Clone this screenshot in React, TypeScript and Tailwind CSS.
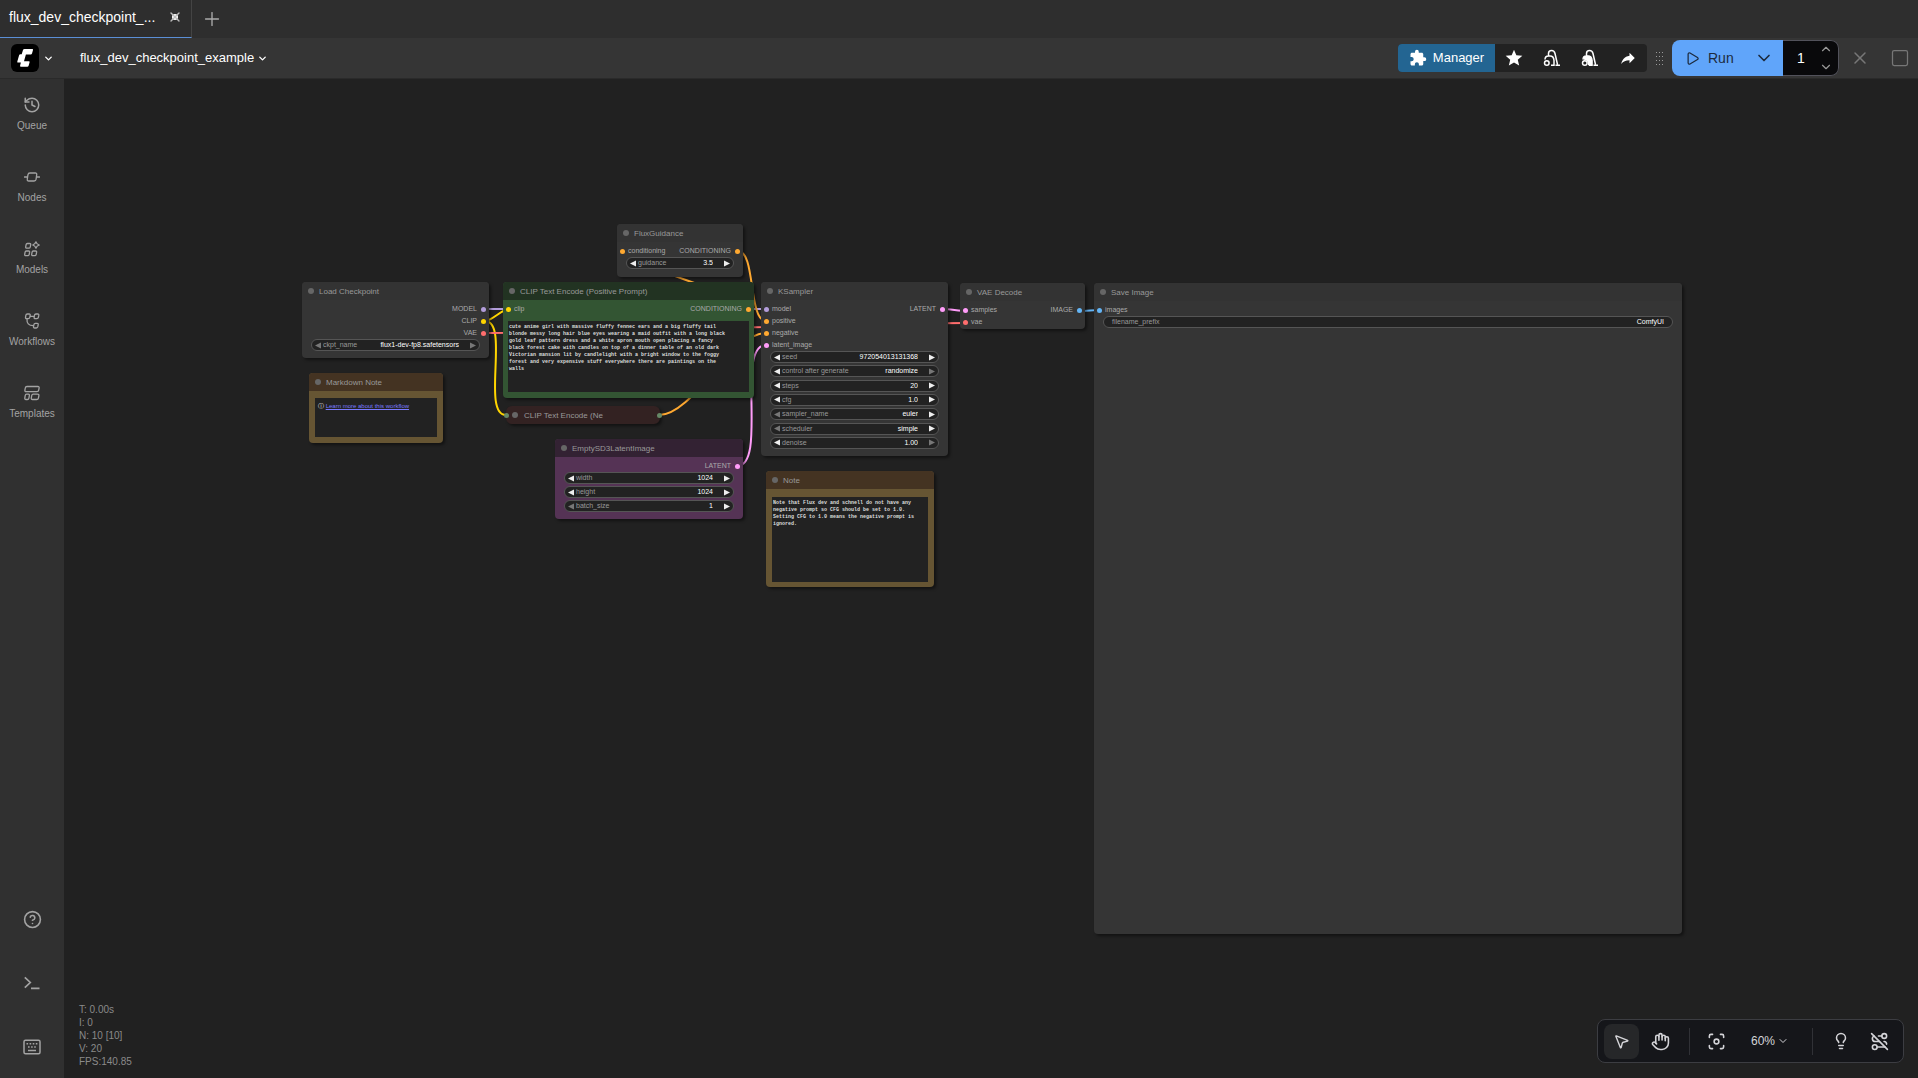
import React from "react";
import {
  ChevronDown,
  ChevronUp,
  CircleQuestionMark,
  Focus,
  Hand,
  History,
  Lightbulb,
  MousePointer2,
  Play,
  Plus,
  RouteOff,
  Square,
  X,
} from "lucide-react";
import { MdExtension, MdStar } from "react-icons/md";

type Slot = { name: string; color: string };
type WidgetData = {
  label: string;
  value: string;
  kind?: "number" | "combo" | "text";
  prevOff?: boolean;
  nextOff?: boolean;
};

const MODEL = "bg-[#b39ddb]";
const CLIP = "bg-[#ffd500]";
const VAE = "bg-[#ff6e6e]";
const COND = "bg-[#ffa931]";
const LATENT = "bg-[#ff9cf9]";
const IMAGE = "bg-[#64b5f6]";

function Arrow({ flip, off, label }: { flip?: boolean; off?: boolean; label: string }) {
  return (
    <button type="button" aria-label={label} disabled={off} className="h-[7px] w-[6px] shrink-0">
      <svg viewBox="0 0 6 7" className={`block h-[7px] w-[6px] ${off ? "fill-[#777]" : "fill-[#eee]"}`}>
        <path d={flip ? "M0 0.5 6 3.5 0 6.5Z" : "M6 0.5 0 3.5 6 6.5Z"} />
      </svg>
    </button>
  );
}

function Widget({ node, data }: { node: string; data: WidgetData }) {
  const id = `${node}-${data.label.replace(/\s/g, "-")}`;
  const isText = data.kind === "text";
  const field = "h-[10px] min-w-0 flex-1 bg-transparent text-right text-[7px] leading-[10px] text-white outline-none";
  return (
    <div
      className={`flex h-[12px] shrink-0 items-center rounded-full border border-[#555] bg-[#222] text-[7px] leading-[10px] ${
        isText ? "px-[8px]" : "px-[3px]"
      }`}
    >
      {!isText && <Arrow off={data.prevOff} label={`Decrease ${data.label}`} />}
      <label htmlFor={id} className={`shrink-0 text-[#999] ${isText ? "" : "ml-[2px]"}`}>
        {data.label}
      </label>
      {data.kind === "combo" ? (
        <select id={id} className={`${field} appearance-none [text-align-last:right]`}>
          <option>{data.value}</option>
        </select>
      ) : (
        <input id={id} type="text" defaultValue={data.value} className={field} />
      )}
      {!isText && (
        <span className="ml-[11px] flex">
          <Arrow flip off={data.nextOff} label={`Increase ${data.label}`} />
        </span>
      )}
    </div>
  );
}

function Node({
  title,
  place,
  head = "bg-[#333]",
  body = "bg-[#353535]",
  inputs = [],
  outputs = [],
  widgets = [],
  children,
}: {
  title: string;
  place: string;
  head?: string;
  body?: string;
  inputs?: Slot[];
  outputs?: Slot[];
  widgets?: WidgetData[];
  children?: React.ReactNode;
}) {
  const key = title.replace(/\W/g, "");
  return (
    <section className={`absolute flex flex-col overflow-hidden rounded-[4px] shadow-[2px_2px_3px_rgba(0,0,0,0.45)] ${place} ${body}`}>
      <header className={`flex h-[18px] shrink-0 items-center gap-[5px] pl-[6px] ${head}`}>
        <span className="size-[6px] rounded-full bg-[#666]" />
        <h2 className="pt-px text-[8px] leading-[10px] whitespace-nowrap text-[#999]">{title}</h2>
      </header>
      {(inputs.length > 0 || outputs.length > 0) && (
        <div className="flex shrink-0 justify-between pt-[3px] text-[7px] leading-[12px] text-[#aaa]">
          <ul className="pl-[3px]">
            {inputs.map((s) => (
              <li key={s.name} className="flex h-[12px] items-center gap-[3px]">
                <span className={`size-[5px] rounded-full ${s.color}`} />
                {s.name}
              </li>
            ))}
          </ul>
          <ul className="pr-[3px]">
            {outputs.map((s) => (
              <li key={s.name} className="flex h-[12px] items-center justify-end gap-[4px]">
                {s.name}
                <span className={`size-[5px] rounded-full ${s.color}`} />
              </li>
            ))}
          </ul>
        </div>
      )}
      {widgets.length > 0 && (
        <div className="flex flex-1 flex-col justify-between px-[9px] pb-[7px]">
          {widgets.map((w) => (
            <Widget key={w.label} node={key} data={w} />
          ))}
        </div>
      )}
      {children}
    </section>
  );
}

const PROMPT = `cute anime girl with massive fluffy fennec ears and a big fluffy tail
blonde messy long hair blue eyes wearing a maid outfit with a long black
gold leaf pattern dress and a white apron mouth open placing a fancy
black forest cake with candles on top of a dinner table of an old dark
Victorian mansion lit by candlelight with a bright window to the foggy
forest and very expensive stuff everywhere there are paintings on the
walls`;

const NOTE = `Note that Flux dev and schnell do not have any
negative prompt so CFG should be set to 1.0.
Setting CFG to 1.0 means the negative prompt is
ignored.`;

const area =
  "block min-h-0 flex-1 resize-none overflow-hidden bg-[#222] px-px pt-[3px] font-['Liberation_Mono',monospace] text-[5px] leading-[7px] font-bold whitespace-pre text-[#ddd] outline-none";

function Links() {
  return (
    <svg aria-hidden="true" viewBox="64 79 1854 999" className="absolute top-0 left-0 h-[999px] w-[1854px] fill-none" strokeWidth="2">
      <g>
        <path stroke="#b39ddb" d="M485 309C555 309 696 309 766 309" />
        <path stroke="#ffd500" d="M485 321C492 321 502 309 509 309M485 321C510 321 481 415 506 415" />
        <path stroke="#ff6e6e" d="M485 333C605 333 846 323 966 323" />
        <path stroke="#ffa931" d="M749 309C784 309 588 251 623 251M738 251C756 251 748 321 766 321M659 415C693 415 732 333 766 333" />
        <path stroke="#ff9cf9" d="M737 466C768 466 735 345 766 345M943 309C949 309 960 311 966 311" />
        <path stroke="#64b5f6" d="M1080 311C1085 311 1095 310 1100 310" />
      </g>
    </svg>
  );
}

function Canvas() {
  return (
    <main className="relative min-w-0 flex-1 overflow-hidden bg-[#212121]">
      <Links />
      <Node
        title="Load Checkpoint"
        place="left-[238px] top-[203px] w-[187px] h-[76px]"
        outputs={[
          { name: "MODEL", color: MODEL },
          { name: "CLIP", color: CLIP },
          { name: "VAE", color: VAE },
        ]}
        widgets={[{ label: "ckpt_name", value: "flux1-dev-fp8.safetensors", kind: "combo", prevOff: true, nextOff: true }]}
      />
      <Node title="Markdown Note" place="left-[245px] top-[294px] w-[134px] h-[70px]" head="bg-[#432]" body="bg-[#653]">
        <div className="mx-[6px] mt-[7px] mb-[6px] flex-1 bg-[#222] px-[3px] pt-[4px] text-[6px] leading-[8px] text-white">
          ⓘ{" "}
          <a href="#workflow" className="text-[#7a7aff] underline">
            Learn more about this workflow
          </a>
        </div>
      </Node>
      <Node
        title="FluxGuidance"
        place="left-[553px] top-[145px] w-[126px] h-[53px]"
        inputs={[{ name: "conditioning", color: COND }]}
        outputs={[{ name: "CONDITIONING", color: COND }]}
        widgets={[{ label: "guidance", value: "3.5" }]}
      />
      <Node
        title="CLIP Text Encode (Positive Prompt)"
        place="left-[439px] top-[203px] w-[251px] h-[116px]"
        head="bg-[#232]"
        body="bg-[#353]"
        inputs={[{ name: "clip", color: CLIP }]}
        outputs={[{ name: "CONDITIONING", color: COND }]}
      >
        <textarea aria-label="Positive prompt" wrap="off" defaultValue={PROMPT} className={`mx-[5px] mt-[6px] mb-[6px] ${area}`} />
      </Node>
      <section className="absolute top-[327px] left-[442px] flex h-[18px] w-[154px] items-center justify-between rounded-[6px] bg-[#322] shadow-[2px_2px_3px_rgba(0,0,0,0.45)]">
        <span className="-ml-[2px] size-[5px] rounded-full bg-[#686]" />
        <span className="ml-[3px] size-[6px] rounded-full bg-[#666]" />
        <h2 className="ml-[6px] flex-1 pt-px text-[8px] leading-[10px] whitespace-nowrap text-[#999]">CLIP Text Encode (Ne</h2>
        <span className="-mr-[2px] size-[5px] rounded-full bg-[#686]" />
      </section>
      <Node
        title="EmptySD3LatentImage"
        place="left-[491px] top-[360px] w-[188px] h-[80px]"
        head="bg-[#323]"
        body="bg-[#535]"
        outputs={[{ name: "LATENT", color: LATENT }]}
        widgets={[
          { label: "width", value: "1024" },
          { label: "height", value: "1024" },
          { label: "batch_size", value: "1", prevOff: true },
        ]}
      />
      <Node
        title="KSampler"
        place="left-[697px] top-[203px] w-[187px] h-[174px]"
        inputs={[
          { name: "model", color: MODEL },
          { name: "positive", color: COND },
          { name: "negative", color: COND },
          { name: "latent_image", color: LATENT },
        ]}
        outputs={[{ name: "LATENT", color: LATENT }]}
        widgets={[
          { label: "seed", value: "972054013131368" },
          { label: "control after generate", value: "randomize", kind: "combo", nextOff: true },
          { label: "steps", value: "20" },
          { label: "cfg", value: "1.0" },
          { label: "sampler_name", value: "euler", kind: "combo", prevOff: true },
          { label: "scheduler", value: "simple", kind: "combo", prevOff: true },
          { label: "denoise", value: "1.00", nextOff: true },
        ]}
      />
      <Node title="Note" place="left-[702px] top-[392px] w-[168px] h-[116px]" head="bg-[#432]" body="bg-[#653]">
        <textarea aria-label="Note" wrap="off" defaultValue={NOTE} className={`mx-[6px] mt-[8px] mb-[5px] ${area}`} />
      </Node>
      <Node
        title="VAE Decode"
        place="left-[896px] top-[204px] w-[125px] h-[46px]"
        inputs={[
          { name: "samples", color: LATENT },
          { name: "vae", color: VAE },
        ]}
        outputs={[{ name: "IMAGE", color: IMAGE }]}
      />
      <Node
        title="Save Image"
        place="left-[1030px] top-[204px] w-[588px] h-[651px]"
        inputs={[{ name: "images", color: IMAGE }]}
        widgets={[{ label: "filename_prefix", value: "ComfyUI", kind: "text" }]}
      />

      <div className="absolute bottom-[10px] left-[15px] text-[10px] leading-[13px] text-[#8a8a8a]">
        <p>T: 0.00s</p>
        <p>I: 0</p>
        <p>N: 10 [10]</p>
        <p>V: 20</p>
        <p>FPS:140.85</p>
      </div>

      <div className="absolute right-[14px] bottom-[15px] flex h-[44px] items-center rounded-lg border border-[#3c3d42] bg-[#15161a] px-[6px] text-[#d4d4d8]">
        <button type="button" aria-label="Select" className="flex size-[35px] items-center justify-center rounded-lg bg-[#262729]">
          <MousePointer2 size={17} strokeWidth={2} />
        </button>
        <button type="button" aria-label="Pan" className="ml-1 flex size-[35px] items-center justify-center">
          <Hand size={19} strokeWidth={2} />
        </button>
        <span className="mr-[9px] ml-[11px] h-[27px] w-px bg-[#303136]" />
        <button type="button" aria-label="Fit view" className="flex size-[35px] items-center justify-center">
          <Focus size={19} strokeWidth={2} />
        </button>
        <button type="button" className="flex h-[35px] w-[72px] items-center justify-center gap-[2px] text-[12px]">
          60% <ChevronDown size={12} />
        </button>
        <span className="mr-[10px] ml-[6px] h-[27px] w-px bg-[#303136]" />
        <button type="button" aria-label="Toggle minimap" className="flex size-[35px] items-center justify-center">
          <Lightbulb size={18} strokeWidth={2} />
        </button>
        <button type="button" aria-label="Hide links" className="ml-1 flex size-[35px] items-center justify-center">
          <RouteOff size={19} strokeWidth={2} />
        </button>
      </div>
    </main>
  );
}

const line = "fill-none stroke-current";

const NodesIcon = () => (
  <svg viewBox="0 0 16 16" className={`size-[16px] ${line}`} strokeWidth="1.3" strokeLinecap="round">
    <path d="M6 4h5.2q1.8 0 1.5 1.6l-.6 4.6q-.3 1.8-2 1.8H4.8q-1.8 0-1.5-1.8l.6-4.4Q4.2 4 6 4ZM.5 8h3M12.5 8h3" />
  </svg>
);
const ModelsIcon = () => (
  <svg viewBox="0 0 16 16" className={`size-[16px] ${line}`} strokeWidth="1.3" strokeLinejoin="round">
    <path d="M3.4 2.500h2.200q1.300 0 1.100 1.200l-.4 2.100Q6 7.200 4.700 7.200H2.800q-1.300 0-1.100-1.300l.4-2.200q.2-1.200 1.300-1.200ZM2.300 10h2.200q1.300 0 1.100 1.200l-.4 2.100q-.3 1.400-1.600 1.400H1.800q-1.300 0-1.100-1.300l.4-2.200Q1.300 10 2.300 10ZM9.300 10h2.200q1.300 0 1.100 1.200l-.4 2.100q-.3 1.400-1.600 1.400H8.800q-1.300 0-1.100-1.300l.4-2.200Q8.300 10 9.300 10ZM12 .8q.6 2.400 3.300 3.200-2.700.8-3.300 3.200-.8-2.400-3.300-3.200Q11.200 3.200 12 .8Z" />
  </svg>
);
const WorkflowsIcon = () => (
  <svg viewBox="0 0 16 16" className={`size-[16px] ${line}`} strokeWidth="1.3">
    <path d="M3.3 1h1.900q1.200 0 1 1.200l-.4 2.100q-.3 1.300-1.500 1.300H2.600q-1.300 0-1.100-1.300l.4-2.100Q2.100 1 3.300 1ZM11.900 1h1.900q1.200 0 1 1.200l-.4 2.100q-.3 1.300-1.500 1.300h-1.700q-1.300 0-1.100-1.300l.4-2.100Q10.700 1 11.900 1ZM11.300 10.400h1.900q1.200 0 1 1.200l-.4 2.100q-.3 1.300-1.500 1.300h-1.700q-1.300 0-1.100-1.300l.4-2.100q.2-1.200 1.400-1.200ZM6 3.300h4.200M3 5.600q-.6 7 6.300 7" />
  </svg>
);
const TemplatesIcon = () => (
  <svg viewBox="0 0 16 16" className={`size-[16px] ${line}`} strokeWidth="1.3">
    <path d="M3 1.500h10.800q1.600 0 1.300 1.500l-.4 2.100q-.2 1.500-1.700 1.500H2.200Q.6 6.600.9 5.100L1.300 3Q1.500 1.500 3 1.500ZM2.600 9.200h1.700q1.300 0 1.100 1.200l-.5 2.700q-.3 1.400-1.500 1.400H1.900q-1.300 0-1.100-1.400l.4-2.500q.2-1.400 1.400-1.400ZM9.300 9.200h4.200q1.600 0 1.400 1.400l-.5 2.500q-.3 1.400-1.700 1.400H8.400q-1.300 0-1.100-1.400l.4-2.500q.2-1.400 1.600-1.400Z" />
  </svg>
);

function VacuumIcon({ solid }: { solid?: boolean }) {
  return (
    <svg viewBox="0 0 18 18" className={`size-[18px] ${line}`} strokeWidth="1.5">
      <path d="M5.500 7V4.500Q5.500 1.500 8.600 1.500 11.300 1.500 12 4.500L14.500 15.500M12.500 16.200h4.500M8 16.200h3V11.500Q10.800 7 7 7H5.500Q2 7 2 10.500" />
      <circle cx="3.800" cy="14" r="2.300" />
      {solid && <path className="fill-current" d="M5.500 7.500H7q3.300 0 3.500 4v4H7.800Q7.800 10.500 3.300 10 3 7.500 5.500 7.500Z" />}
    </svg>
  );
}

function SideItem({ icon, label }: { icon: React.ReactNode; label: string }) {
  return (
    <button type="button" className="flex h-[72px] flex-col items-center pt-[17px] text-[10px] leading-[12px]">
      <span className="flex h-[18px] items-center">{icon}</span>
      <span className="mt-[6px]">{label}</span>
    </button>
  );
}

function Sidebar() {
  return (
    <nav className="flex w-[64px] shrink-0 flex-col bg-[#303030] text-[#a3a3a3]">
      <SideItem icon={<History size={18} strokeWidth={2} />} label="Queue" />
      <SideItem icon={<NodesIcon />} label="Nodes" />
      <SideItem icon={<ModelsIcon />} label="Models" />
      <SideItem icon={<WorkflowsIcon />} label="Workflows" />
      <SideItem icon={<TemplatesIcon />} label="Templates" />
      <div className="mt-auto flex flex-col">
        <button type="button" aria-label="Help" className="flex h-[64px] items-center justify-center">
          <CircleQuestionMark size={19} strokeWidth={2} />
        </button>
        <button type="button" aria-label="Console" className="flex h-[64px] items-center justify-center">
          <svg viewBox="0 0 16 14" className={`h-[14px] w-[16px] ${line}`} strokeWidth="1.7">
            <path d="M.8 1.300 6.300 6.500.8 11.700M7 12.300h8.500" />
          </svg>
        </button>
        <button type="button" aria-label="Keyboard shortcuts" className="flex h-[63px] items-center justify-center">
          <svg viewBox="0 0 18 16" className={`h-[16px] w-[18px] ${line}`} strokeWidth="1.5">
            <rect x="1" y="1.200" width="16" height="13.500" rx="1.500" />
            <path d="M3.500 4.800h11M5 8h8" strokeDasharray="1.600 1.500" />
            <path d="M5 11.500h8" />
          </svg>
        </button>
      </div>
    </nav>
  );
}

const tool = "flex h-[28px] w-[38px] items-center justify-center";

export default function App() {
  return (
    <div className="flex h-screen flex-col overflow-hidden bg-[#212121] font-['Liberation_Sans',Arial,sans-serif]">
      <div className="flex h-[38px] shrink-0 items-stretch bg-[#2e2e2e] text-white">
        <div className="flex w-[192px] items-center justify-between border-r border-b border-r-[#444] border-b-[#5b8fd6] pr-[10px] pb-[3px] pl-[9px]">
          <button type="button" className="text-[14px] leading-[18px]">
            flux_dev_checkpoint_...
          </button>
          <button type="button" aria-label="Close tab" className="relative flex size-[12px] items-center justify-center">
            <X size={16} strokeWidth={2} className="absolute text-[#bbb]" />
            <span className="size-[6px] rounded-full bg-white" />
          </button>
        </div>
        <button type="button" aria-label="New workflow" className="ml-[9px] text-[#aaa]">
          <Plus size={22} strokeWidth={1.5} />
        </button>
      </div>

      <header className="flex h-[41px] shrink-0 items-center border-b border-[#2a2a2a] bg-[#353535] text-white">
        <button type="button" aria-label="Menu" className="ml-[11px] flex items-center gap-[4px]">
          <svg viewBox="0 0 28 28" className="size-[28px]">
            <rect width="28" height="28" rx="6" fill="#000" />
            <path
              fill="#fff"
              d="M13.500 5H21.300q1 0 .7 1l-1 3.500q-.3 1-1.300 1h-4.800l-1.900 6.800h4.900q1 0 .7 1l-1 3.500q-.3 1-1.300 1H10q-1.200 0-.9-1.200l.8-3H7.200q-1.200 0-.9-1.200l1.800-6.200q.3-1 1.300-1h1.300l1.300-4.200q.3-1 1.500-1Z"
            />
          </svg>
          <ChevronDown size={11} strokeWidth={3} />
        </button>
        <button type="button" className="ml-[26px] flex items-center gap-[3px] text-[13px] leading-[18px]">
          flux_dev_checkpoint_example
          <ChevronDown size={11} strokeWidth={3} />
        </button>

        <div className="ml-auto flex items-center overflow-hidden rounded-[4px] bg-[#222]">
          <button type="button" className="flex h-[28px] w-[97px] items-center justify-center gap-[6px] bg-[#236592] text-[13px]">
            <MdExtension size={18} />
            Manager
          </button>
          <button type="button" aria-label="Favorites" className={tool}>
            <MdStar size={20} />
          </button>
          <button type="button" aria-label="Unload models" className={tool}>
            <VacuumIcon />
          </button>
          <button type="button" aria-label="Free cache" className={tool}>
            <VacuumIcon solid />
          </button>
          <button type="button" aria-label="Share" className={tool}>
            <svg viewBox="0 0 24 24" className="size-[18px] fill-current">
              <path d="M21,12L14,5V9C7,10 4,15 3,20C5.500,16.500 9,14.900 14,14.900V19L21,12Z" />
            </svg>
          </button>
        </div>

        <span className="mx-[9px] grid grid-cols-3 gap-x-[2px] gap-y-[3px]">
          {Array.from({ length: 12 }, (_, i) => (
            <i key={i} className="size-px bg-[#999]" />
          ))}
        </span>

        <div className="flex h-[36px] overflow-hidden rounded-lg">
          <button type="button" className="flex w-[73px] items-center gap-[8px] bg-[#60a5fa] pl-[13px] text-[14px] text-[#1c2a3d]">
            <Play size={15} strokeWidth={2} />
            Run
          </button>
          <button type="button" aria-label="Queue options" className="flex w-[38px] items-center justify-center bg-[#60a5fa] text-[#1c2a3d]">
            <ChevronDown size={20} strokeWidth={2} />
          </button>
          <div className="flex w-[56px] items-center rounded-r-lg border border-l-0 border-[#52525b] bg-[#09090b]">
            <input aria-label="Batch count" type="text" defaultValue="1" className="w-[36px] bg-transparent text-center text-[14px] text-white outline-none" />
            <span className="flex flex-col gap-[4px] text-[#999]">
              <button type="button" aria-label="Increment">
                <ChevronUp size={14} />
              </button>
              <button type="button" aria-label="Decrement">
                <ChevronDown size={14} />
              </button>
            </span>
          </div>
        </div>
        <button type="button" aria-label="Cancel run" className="ml-[11px] text-[#777]">
          <X size={20} strokeWidth={1.8} />
        </button>
        <button type="button" aria-label="Clear queue" className="mr-[8px] ml-[20px] text-[#777]">
          <Square size={20} strokeWidth={1.5} />
        </button>
      </header>

      <div className="flex min-h-0 flex-1">
        <Sidebar />
        <Canvas />
      </div>
    </div>
  );
}
